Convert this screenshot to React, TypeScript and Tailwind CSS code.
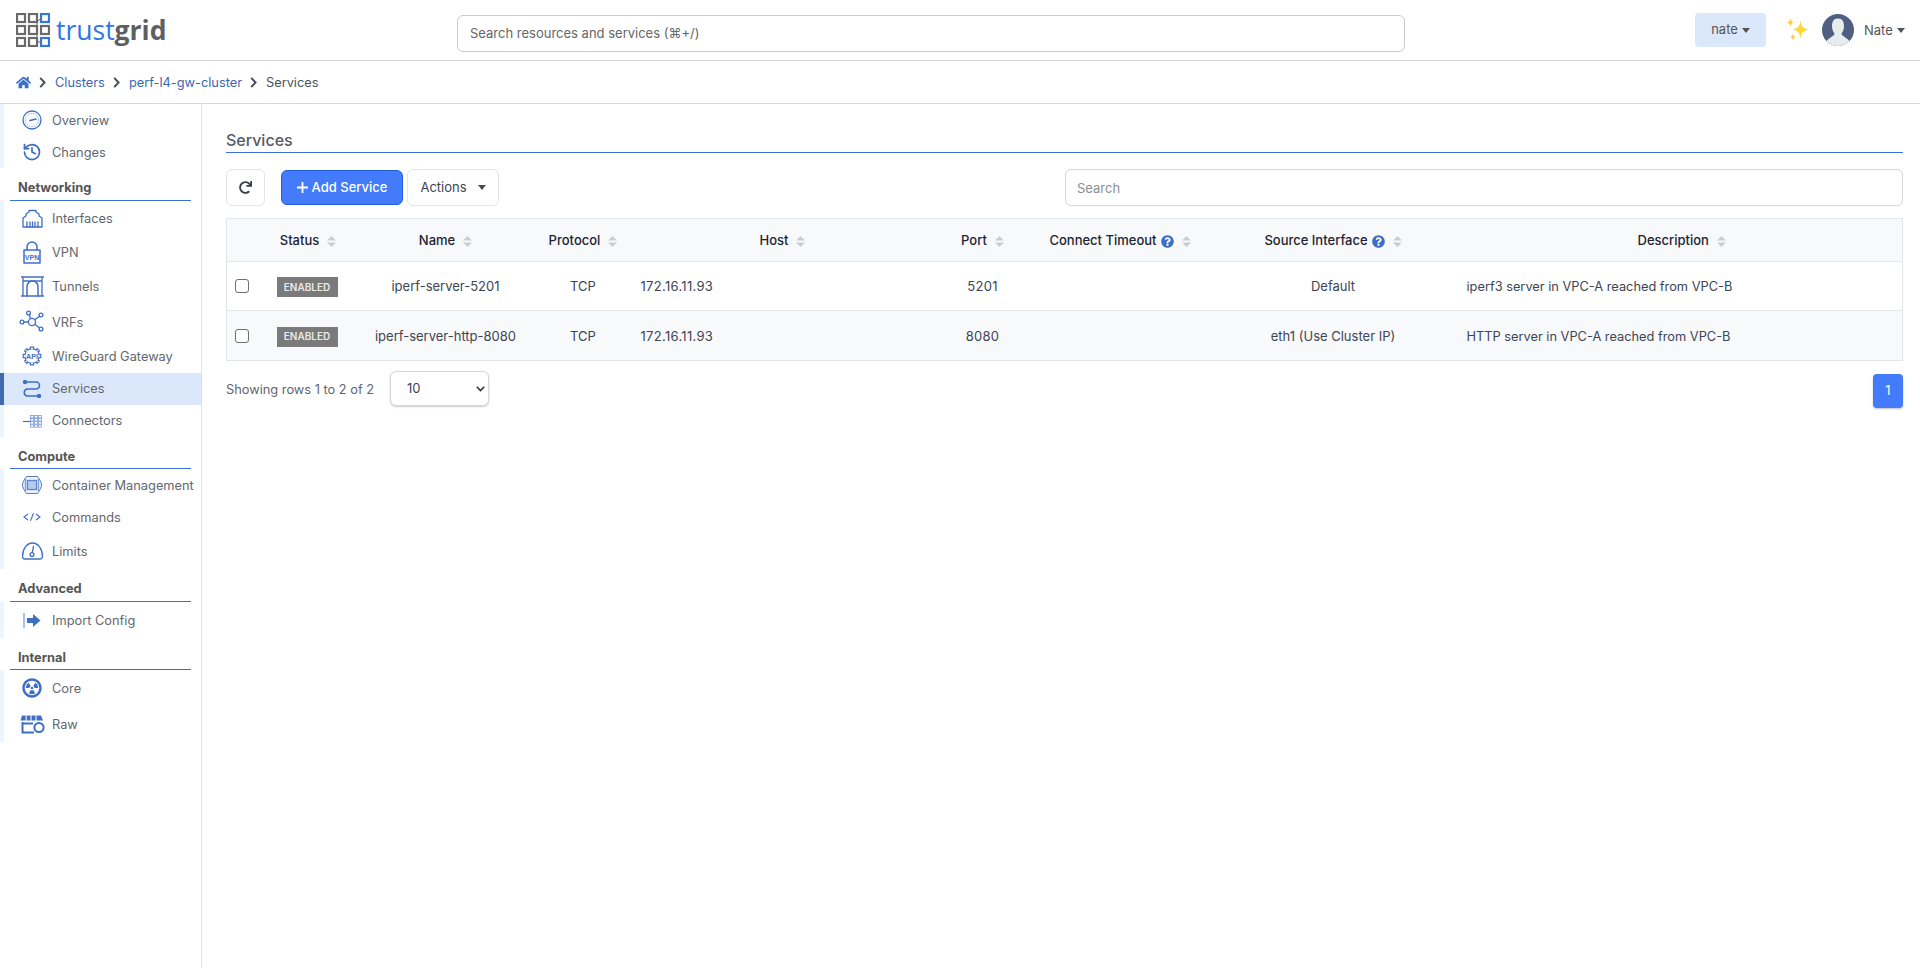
import React from "react";
import { FaHome, FaQuestionCircle, FaRadiationAlt, FaRedo } from "react-icons/fa";
import { History } from "lucide-react";

const B = "#3f6fc4";

function Logo() {
  const gray = "#6a6a6a";
  const blue = "#2f76e6";
  const cells: [number, number, string][] = [
    [0, 0, gray], [12, 0, gray], [24, 0, blue],
    [0, 12, gray], [12, 12, gray], [24, 12, gray],
    [0, 24, gray], [12, 24, gray], [24, 24, blue],
  ];
  return (
    <svg width="34" height="34" viewBox="0 0 34 34" fill="none">
      {cells.map(([x, y, c], i) => (
        <rect key={i} x={x + 1} y={y + 1} width="8" height="8" stroke={c} strokeWidth="2.2" />
      ))}
      <path d="M21 17 L21 9 L25 5 M21 17 L21 29 L25 29" stroke={gray} strokeWidth="1" />
    </svg>
  );
}

function Sort() {
  return (
    <svg width="9" height="11" viewBox="0 0 9 11" className="inline-block shrink-0">
      <path d="M4.5 0 L9 4.5 H0 Z M4.5 11 L0 6.5 H9 Z" fill="#c9cdd2" />
    </svg>
  );
}

function Caret({ color = "#555" }: { color?: string }) {
  return (
    <svg width="8" height="5" viewBox="0 0 8 5" className="inline-block">
      <path d="M0 0 H8 L4 5 Z" fill={color} />
    </svg>
  );
}

function Chevron() {
  return (
    <svg width="7" height="11" viewBox="0 0 7 11" fill="none" stroke="#444b55" strokeWidth="1.9" className="shrink-0">
      <path d="M1.2 0.8 L5.6 5.5 L1.2 10.2" />
    </svg>
  );
}

const s = { fill: "none", stroke: B, strokeWidth: 1.3, strokeLinecap: "round" as const, strokeLinejoin: "round" as const };

const OverviewIcon = () => (
  <svg width="20" height="20" viewBox="0 0 20 20" {...s}>
    <circle cx="10" cy="10" r="9" />
    <circle cx="10" cy="10" r="6.6" strokeWidth="0.5" strokeDasharray="1 1.5" />
    <path d="M8 10.5 L14 9" strokeWidth="1.6" />
  </svg>
);
const InterfacesIcon = () => (
  <svg width="21" height="19" viewBox="0 0 21 19" {...s}>
    <path d="M1 18 V9 L4 7 V5 L7 3 V1.5 H14 V3 L17 5 V7 L20 9 V18 Z" />
    <path d="M5 18 V13 M8 18 V13 M10.5 18 V13 M13 18 V13 M16 18 V13" />
  </svg>
);
const VpnIcon = () => (
  <svg width="18" height="23" viewBox="0 0 18 23" {...s}>
    <path d="M4 9 V6 A5 5 0 0 1 14 6 V9" strokeWidth="1.5" />
    <rect x="1" y="9" width="16" height="13" strokeWidth="1.5" />
    <text x="9" y="18.5" textAnchor="middle" fontSize="7" fontWeight="700" fontFamily="Liberation Sans, sans-serif" fill={B} stroke="none">VPN</text>
  </svg>
);
const TunnelIcon = () => (
  <svg width="23" height="21" viewBox="0 0 23 21" {...s}>
    <path d="M0.5 1 H22.5 M0.5 20 H22.5 M2 1 V20 M21 1 V20 M2 5 H21" />
    <path d="M6 20 V10.5 A5.5 5.5 0 0 1 17 10.5 V20" strokeWidth="1.5" />
  </svg>
);
const VrfIcon = () => (
  <svg width="26" height="22" viewBox="0 0 26 22" {...s}>
    <circle cx="13" cy="12" r="3.6" />
    <circle cx="9.5" cy="3" r="1.9" />
    <circle cx="22" cy="5" r="1.9" />
    <circle cx="3" cy="12" r="1.9" />
    <circle cx="22" cy="19" r="1.9" />
    <path d="M11.5 8.7 L10.3 4.8 M15.8 9.8 L20.5 6.2 M9.4 12 L5 12 M16 14.4 L20.4 17.8" />
  </svg>
);
const ApiIcon = () => {
  const teeth = [0, 45, 90, 135, 180, 225, 270, 315];
  return (
    <svg width="20" height="20" viewBox="0 0 20 20" fill="none" stroke={B} strokeWidth="1.2">
      <circle cx="10" cy="10" r="7.2" />
      {teeth.map((a) => (
        <path key={a} d="M8.4 2.9 V1.2 H11.6 V2.9" fill="#fff" transform={`rotate(${a} 10 10)`} />
      ))}
      <circle cx="10" cy="10" r="6.5" fill="#fff" stroke="none" />
      <text x="10" y="12.7" textAnchor="middle" fontSize="7.2" fontWeight="700" fontFamily="Liberation Sans, sans-serif" fill={B} stroke="none">API</text>
    </svg>
  );
};
const ServicesIcon = () => (
  <svg width="20" height="18" viewBox="0 0 20 18" fill="none" stroke={B} strokeWidth="1.6" strokeLinecap="round">
    <path d="M3 2 H14 A3.5 3.5 0 0 1 14 9 H5 A3.6 3.6 0 0 0 5 16 H17" />
    <circle cx="3" cy="2" r="1.4" fill={B} />
    <circle cx="17" cy="16" r="1.4" fill={B} />
  </svg>
);
const ConnectorsIcon = () => (
  <svg width="19" height="13" viewBox="0 0 19 13" fill="none" stroke="#6f92d2" strokeWidth="0.7">
    <path d="M0 6.5 H7" stroke={B} strokeWidth="1.1" />
    {[0, 1, 2, 3].map((r) =>
      [0, 1, 2].map((c) => <rect key={`${r}${c}`} x={7.4 + c * 4} y={0.5 + r * 3.1} width="3" height="2.4" />)
    )}
  </svg>
);
const ContainerIcon = () => (
  <svg width="20" height="20" viewBox="0 0 20 20" fill="none" stroke={B} strokeWidth="0.9">
    <path d="M4.5 1.5 H15.5 C18 5 19.5 7.5 19.5 10 C19.5 12.5 18 15 15.5 18.5 H4.5 C2 15 0.5 12.5 0.5 10 C0.5 7.5 2 5 4.5 1.5 Z" fill="#eef3fb" />
    <path d="M3.5 4 V16 M16.5 4 V16" stroke="#7f9fd8" strokeWidth="1.4" />
    <rect x="5.5" y="5.5" width="9" height="9" fill="#b7caeb" stroke="#5e86cf" strokeWidth="1.3" />
  </svg>
);
const CommandsIcon = () => (
  <svg width="18" height="8" viewBox="0 0 18 8" fill="none" stroke={B} strokeWidth="1.1">
    <path d="M5 1 L1 4 L5 7 M13 1 L17 4 L13 7 M10.5 0.3 L7.5 7.7" />
  </svg>
);
const LimitsIcon = () => (
  <svg width="23" height="18" viewBox="0 0 23 18" {...s}>
    <path d="M4 17 H19 A2.5 2.5 0 0 0 21.5 14.5 A10 13.5 0 0 0 1.5 14.5 A2.5 2.5 0 0 0 4 17 Z" strokeWidth="1.3" />
    <circle cx="11" cy="12.5" r="1.9" />
    <path d="M11.3 10.6 L12.5 4.5" />
  </svg>
);
const ImportIcon = () => (
  <svg width="18" height="15" viewBox="0 0 18 15">
    <rect x="0" y="0" width="2" height="15" fill="#a9c0e6" />
    <path d="M4 5 H10 V1 L17.5 7.5 L10 14 V10 H4 Z" fill={B} />
  </svg>
);
const RawIcon = () => (
  <svg width="25" height="19" viewBox="0 0 25 19" fill="none" stroke={B} strokeWidth="2">
    <path d="M2 0.5 H21 L23 5.5 H0.5 Z" fill={B} stroke="none" />
    <path d="M6.2 0 V6 M11 0 V6 M16 0 V6" stroke="#fff" strokeWidth="1" />
    <path d="M2.5 7 V17.5 H14 M2.5 8.5 H13" />
    <circle cx="19" cy="12.5" r="4.6" fill="#fff" />
  </svg>
);

const Sparkles = () => (
  <svg width="24" height="24" viewBox="0 0 24 24">
    <path d="M14.5 2 C15.2 8.5 16.5 10 23 11.5 C16.5 13 15.2 14.5 14.5 21 C13.8 14.5 12.5 13 6.5 11.5 C12.5 10 13.8 8.5 14.5 2 Z" fill="#fdd835" />
    <path d="M4.5 0 C4.8 3 5.5 3.8 8 4.5 C5.5 5.2 4.8 6 4.5 9 C4.2 6 3.5 5.2 1 4.5 C3.5 3.8 4.2 3 4.5 0 Z" fill="#fbc94a" />
    <path d="M7 15 C7.3 17.6 8 18.2 10 19 C8 19.8 7.3 20.4 7 23 C6.7 20.4 6 19.8 4 19 C6 18.2 6.7 17.6 7 15 Z" fill="#fbc94a" />
  </svg>
);

const Avatar = () => (
  <svg width="32" height="32" viewBox="0 0 32 32">
    <circle cx="16" cy="16" r="16" fill="#505e82" />
    <clipPath id="av"><circle cx="16" cy="16" r="16" /></clipPath>
    <g clipPath="url(#av)" fill="#e7ecec">
      <path d="M16 4.5 C11.5 4.5 10 8 10 12 C10 15 11 18 12.5 19.5 C12.5 23 4 23.5 2 32 H30 C28 23.5 19.5 23 19.5 19.5 C21 18 22 15 22 12 C22 8 20.5 4.5 16 4.5 Z" />
    </g>
  </svg>
);

type Row = { label: string; icon: React.ReactNode; h: string; active?: boolean; first?: boolean; pt?: string };

function NavRow({ label, icon, h, active, first, pt = "pt-[1px]" }: Row) {
  return (
    <div
      className={`flex items-center ${h} ${first ? "-mt-[10px]" : ""} ${
        active ? "-ml-[4px] border-l-4 border-[#4169b0] bg-[#dbe8fb]" : ""
      }`}
    >
      <div className="w-[48px] pl-[8px] flex justify-center items-center shrink-0">{icon}</div>
      <span className={`${pt} text-[12.8px] text-[#62676e] whitespace-nowrap`}>{label}</span>
    </div>
  );
}

function SectionHead({ label, h, pb }: { label: string; h: string; pb: string }) {
  return (
    <div className={`mx-[10px] pl-[8px] border-b border-[#3b6fd8] flex items-end ${h} ${pb}`}>
      <span className="text-[12.8px] leading-[16px] font-bold text-[#555]">{label}</span>
    </div>
  );
}

function Sidebar() {
  return (
    <aside className="w-[202px] shrink-0 border-r border-[#dfe1e5]">
      <div className="border-l-4 border-[#eef5ff]">
        <NavRow label="Overview" icon={<OverviewIcon />} h="h-[32px]" />
        <NavRow label="Changes" icon={<History size={20} color={B} strokeWidth={2.1} />} h="h-[32px]" />
      </div>
      <SectionHead label="Networking" h="h-[33px]" pb="pb-[4px]" />
      <div className="mt-[10px] border-l-4 border-[#eef5ff]">
        <NavRow first label="Interfaces" icon={<InterfacesIcon />} h="h-[34px]" />
        <NavRow label="VPN" icon={<VpnIcon />} h="h-[34px]" />
        <NavRow label="Tunnels" icon={<TunnelIcon />} h="h-[34px]" />
        <NavRow label="VRFs" icon={<VrfIcon />} h="h-[36px]" pt="pt-[3px]" />
        <NavRow label="WireGuard Gateway" icon={<ApiIcon />} h="h-[34px]" />
        <NavRow active label="Services" icon={<ServicesIcon />} h="h-[32px]" pt="pt-0" />
        <NavRow label="Connectors" icon={<ConnectorsIcon />} h="h-[32px]" pt="pt-0" />
      </div>
      <SectionHead label="Compute" h="h-[32px]" pb="pb-[3px]" />
      <div className="border-l-4 border-[#eef5ff]">
        <NavRow label="Container Management" icon={<ContainerIcon />} h="h-[32px]" />
        <NavRow label="Commands" icon={<CommandsIcon />} h="h-[32px]" />
        <NavRow label="Limits" icon={<LimitsIcon />} h="h-[36px]" />
      </div>
      <SectionHead label="Advanced" h="h-[33px]" pb="pb-[4px]" />
      <div className="border-l-4 border-[#eef5ff]">
        <NavRow label="Import Config" icon={<ImportIcon />} h="h-[36px]" />
      </div>
      <SectionHead label="Internal" h="h-[32px]" pb="pb-[3px]" />
      <div className="border-l-4 border-[#eef5ff]">
        <NavRow label="Core" icon={<FaRadiationAlt size={20} color={B} />} h="h-[36px]" />
        <NavRow label="Raw" icon={<RawIcon />} h="h-[36px]" />
      </div>
    </aside>
  );
}

function Th({ label, help, className = "" }: { label: string; help?: boolean; className?: string }) {
  return (
    <th className={`pt-[2px] font-medium text-[#1c2433] text-[13px] ${className}`}>
      <span className="inline-flex items-center">
        {label}
        {help && <FaQuestionCircle size={13} color={B} className="ml-[4px]" />}
        <span className="ml-[8px] flex"><Sort /></span>
      </span>
    </th>
  );
}

function DataRow({ name, port, src, desc, stripe }: { name: string; port: string; src: string; desc: string; stripe?: boolean }) {
  return (
    <tr className={`border-t border-[#e3e5e9] text-[13px] text-[#3d4554] ${stripe ? "bg-[#f8f9fb] h-[50px]" : "bg-white h-[49px]"}`}>
      <td className="pl-[8px]">
        <input type="checkbox" className="appearance-none block w-[14px] h-[14px] rounded-[3px] border border-[#6f6f6f] bg-white" />
      </td>
      <td className="pl-[6px] pt-[2px]">
        <span className="flex items-center justify-center w-[61px] h-[20px] bg-[#7a7a7a] text-[#e9e9e9] text-[10px] font-semibold">ENABLED</span>
      </td>
      <td className="pt-[2px] text-center">{name}</td>
      <td className="pt-[2px] text-center">TCP</td>
      <td className="pt-[2px] pl-[20px] tracking-[0.3px]">172.16.11.93</td>
      <td className="pt-[2px] text-center tracking-[0.3px]">{port}</td>
      <td></td>
      <td className="pt-[2px] text-center">{src}</td>
      <td className="pt-[2px] pl-[6px] text-[12.8px]">{desc}</td>
    </tr>
  );
}

export default function App() {
  return (
    <div className="h-screen bg-white flex flex-col overflow-hidden font-['Inter',sans-serif]">
      <header className="h-[61px] shrink-0 border-b border-[#d4d6da] flex items-center pl-[16px] pr-[14px]">
        <div className="w-[441px] flex items-center shrink-0">
          <Logo />
          <span className="ml-[6px] text-[26.5px] leading-none font-['Open_Sans',sans-serif]">
            <span className="text-[#2f76e6]">trust</span>
            <span className="font-bold text-[#5f5f5f]">grid</span>
          </span>
        </div>
        <input
          placeholder="Search resources and services (⌘+/)"
          className="mt-[6px] w-[948px] h-[37px] rounded-[6px] border border-[#c9ccd1] px-[12px] text-[13px] placeholder:text-[#666] outline-none"
        />
        <button className="ml-[290px] w-[71px] h-[34px] rounded-[4px] bg-[#dbe8fb] text-[13px] text-[#555] flex items-center justify-center gap-[4px]">
          nate <Caret />
        </button>
        <span className="ml-[20px] flex"><Sparkles /></span>
        <span className="ml-[12px] flex"><Avatar /></span>
        <span className="ml-[10px] pt-[1px] text-[13px] text-[#555] flex items-center gap-[4px]">Nate <Caret /></span>
      </header>

      <nav className="h-[43px] shrink-0 border-b border-[#d4d6da] flex items-center pl-[16px] pt-[1px] text-[12.8px]">
        <FaHome size={15} color={B} />
        <span className="ml-[8px] flex"><Chevron /></span>
        <span className="ml-[9px] text-[#3a66b0]">Clusters</span>
        <span className="ml-[8px] flex"><Chevron /></span>
        <span className="ml-[9px] text-[#3a66b0]">perf-l4-gw-cluster</span>
        <span className="ml-[8px] flex"><Chevron /></span>
        <span className="ml-[9px] text-[#4a5260]">Services</span>
      </nav>

      <div className="flex-1 flex min-h-0">
        <Sidebar />
        <main className="flex-1 pl-[24px] pr-[17px] pt-[26px]">
          <h1 className="h-[23px] border-b border-[#3b6fe0] text-[16px] leading-[20px] font-medium text-[#555b63]">Services</h1>

          <div className="mt-[16px] flex items-center h-[37px]">
            <button className="w-[39px] h-[37px] rounded-[6px] border border-[#e3e5e8] flex items-center justify-center">
              <FaRedo size={13} color="#3a3f47" />
            </button>
            <button className="ml-[16px] w-[122px] h-[35px] rounded-[6px] bg-[#437bfb] border border-[#1f5fdd] text-white text-[13px] font-medium flex items-center justify-center gap-[4px]">
              <svg width="11" height="11" viewBox="0 0 11 11" stroke="#fff" strokeWidth="1.8"><path d="M5.5 0 V11 M0 5.5 H11" /></svg>
              Add Service
            </button>
            <button className="ml-[4px] w-[92px] h-[37px] rounded-[6px] border border-[#e3e5e8] text-[13px] text-[#3d4554] flex items-center justify-center gap-[11px]">
              Actions <Caret color="#4a4a4a" />
            </button>
            <input
              placeholder="Search"
              className="ml-auto w-[838px] h-[37px] rounded-[6px] border border-[#d4d6da] px-[11px] text-[13px] placeholder:text-[#8a8f96] outline-none"
            />
          </div>

          <table className="mt-[12px] w-full table-fixed border border-[#e3e5e9] border-collapse">
            <colgroup>
              <col className="w-[44px]" />
              <col className="w-[75px]" />
              <col className="w-[200px]" />
              <col className="w-[75px]" />
              <col className="w-[310px]" />
              <col className="w-[104px]" />
              <col className="w-[171px]" />
              <col className="w-[255px]" />
              <col />
            </colgroup>
            <thead>
              <tr className="h-[43px] bg-[#f8f9fb]">
                <th></th>
                <Th label="Status" />
                <Th label="Name" />
                <Th label="Protocol" />
                <Th label="Host" className="pl-[14px]" />
                <Th label="Port" />
                <Th label="Connect Timeout" help />
                <Th label="Source Interface" help />
                <Th label="Description" className="text-left pl-[177px]" />
              </tr>
            </thead>
            <tbody>
              <DataRow name="iperf-server-5201" port="5201" src="Default" desc="iperf3 server in VPC-A reached from VPC-B" />
              <DataRow stripe name="iperf-server-http-8080" port="8080" src="eth1 (Use Cluster IP)" desc="HTTP server in VPC-A reached from VPC-B" />
            </tbody>
          </table>

          <div className="mt-[10px] flex items-start">
            <span className="mt-[11px] text-[12.8px] leading-[16px] text-[#5f6670]">Showing rows 1 to 2 of 2</span>
            <div className="relative ml-[16px]">
              <select className="appearance-none block w-[99px] h-[35px] rounded-[6px] border border-[#d4d6da] shadow-[0_1px_2px_rgba(0,0,0,0.2)] bg-white pl-[16px] text-[13px] text-[#3d4554] outline-none">
                <option>10</option>
              </select>
              <svg width="9" height="6" viewBox="0 0 9 6" className="absolute right-[4px] top-[15px]" fill="none" stroke="#333" strokeWidth="1.6">
                <path d="M0.8 0.8 L4.5 4.6 L8.2 0.8" />
              </svg>
            </div>
            <button className="ml-auto mt-[3px] w-[30px] h-[34px] rounded-[4px] bg-[#437bfb] text-white text-[13px] shadow-[0_1px_2px_rgba(0,0,0,0.25)]">1</button>
          </div>
        </main>
      </div>
    </div>
  );
}
